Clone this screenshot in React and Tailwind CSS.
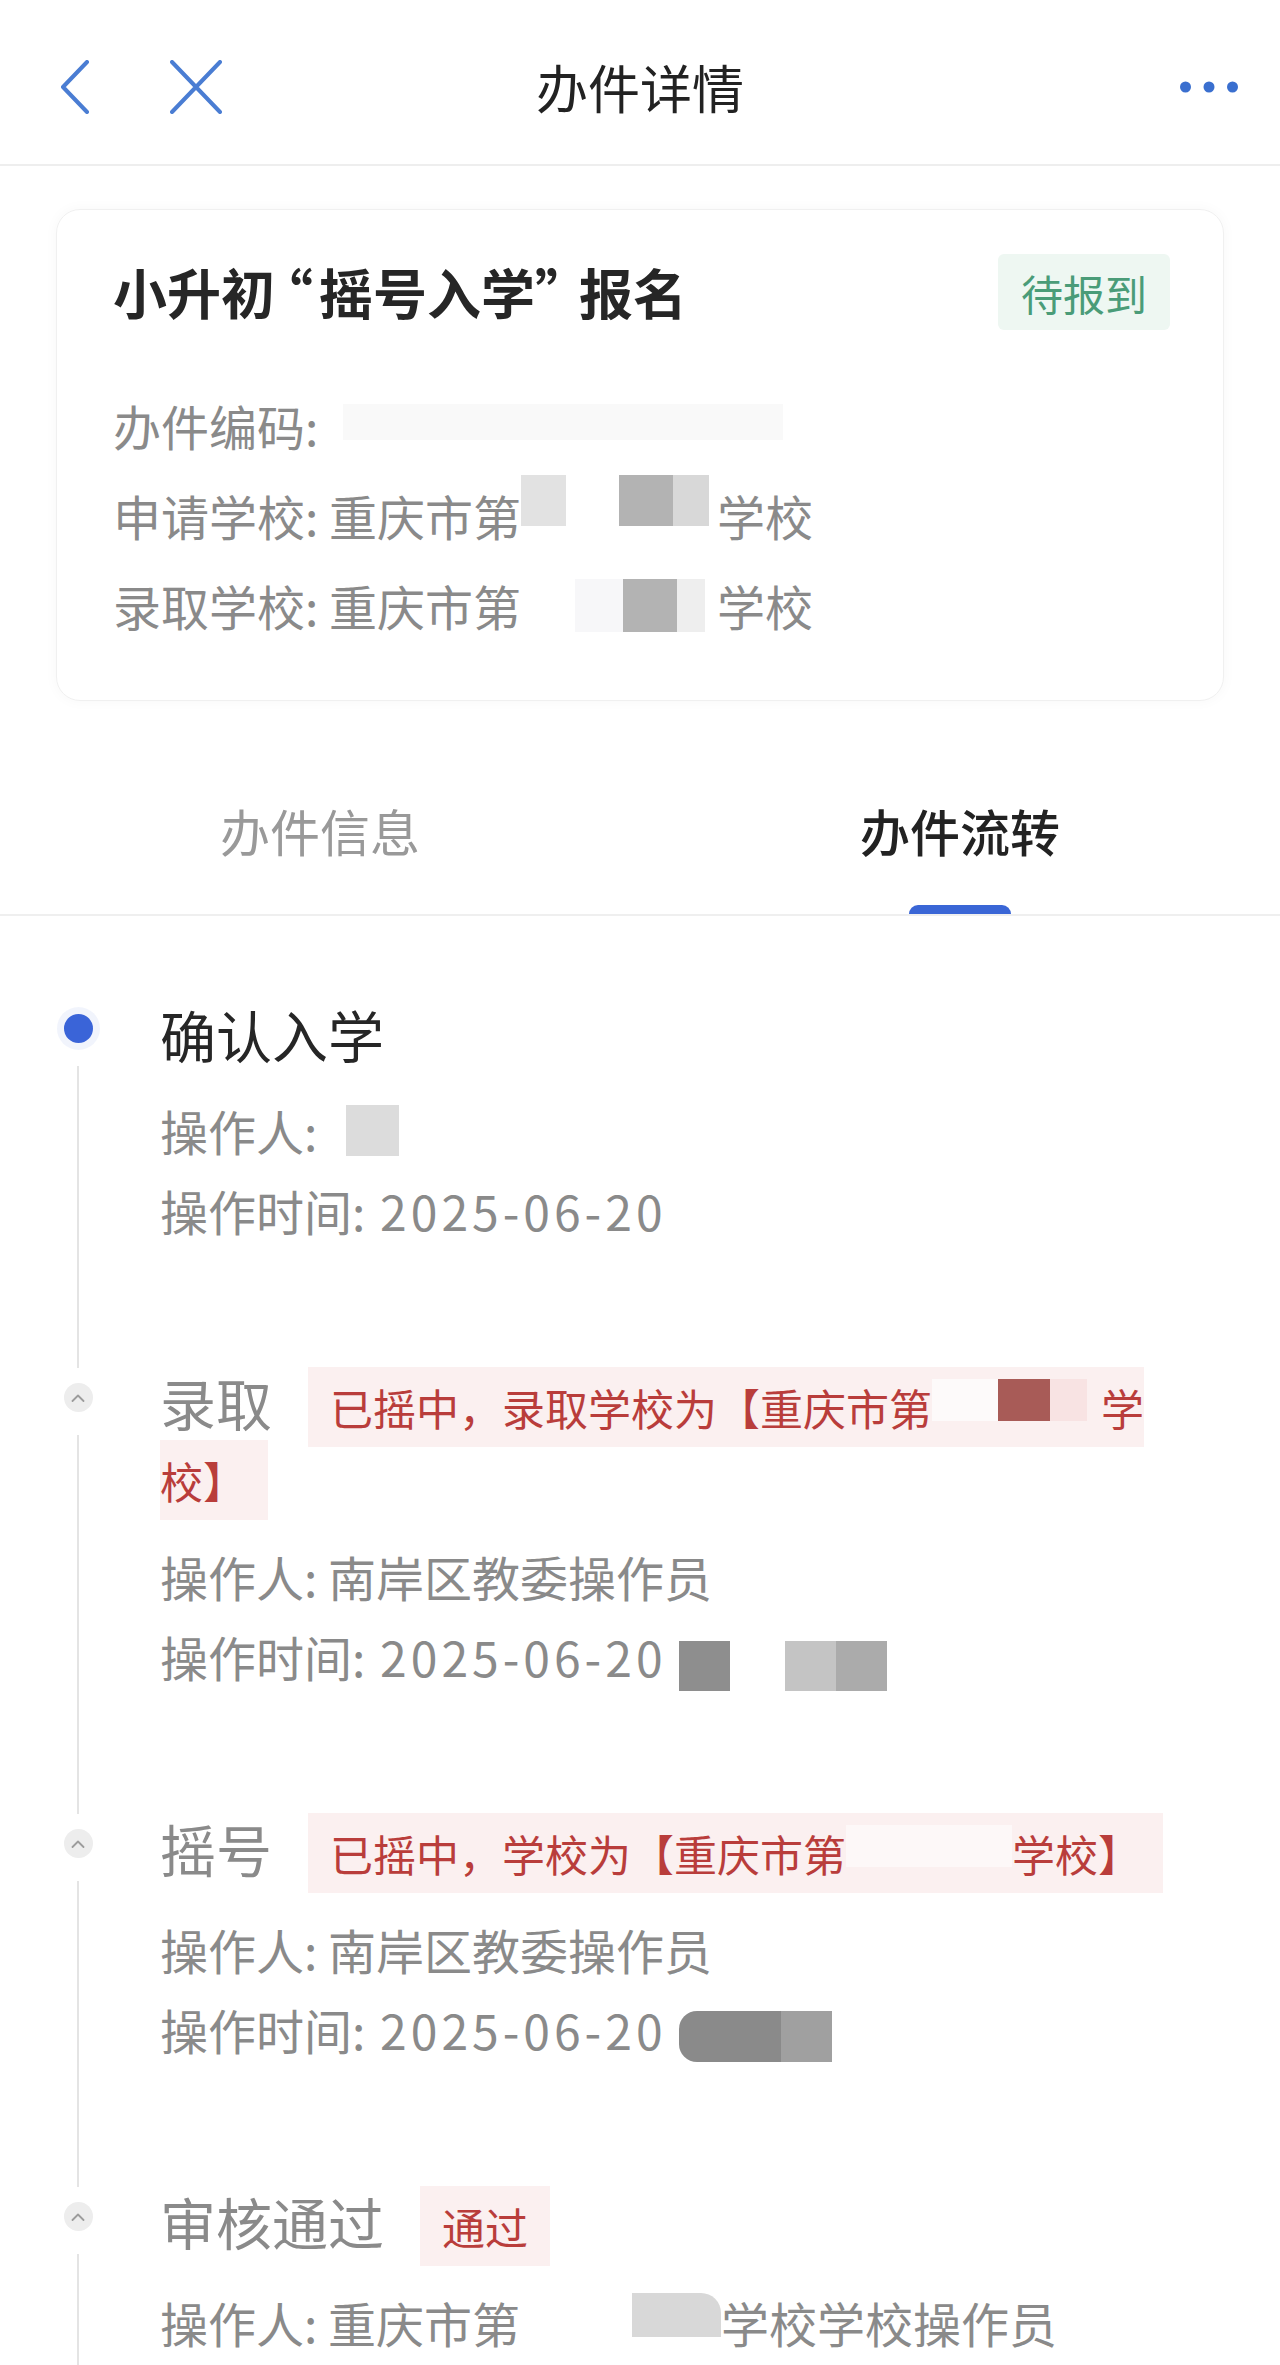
import React from "react";

// small mosaic patches that hide personal data in the screenshot
const Blot = ({ c }) => <span className={"inline-block " + c} />;

const ChevronUp = () => (
  <svg width="14" height="8" viewBox="0 0 14 8" fill="none">
    <path d="M1.5 7 L7 1.5 L12.5 7" stroke="#9c9c9c" strokeWidth="1.8" strokeLinecap="round" strokeLinejoin="round" />
  </svg>
);

const Tag = ({ children, className = "" }) => (
  <span className={"ml-[36px] px-[22px] py-[9px] bg-[#fbf0f0] text-[#b93d3b] text-[43px] " + className}>
    {children}
  </span>
);

const Date = () => <span className="ml-[4px] tracking-[4px]">2025-06-20</span>;

const Step = ({ active, title, tag, children }) => (
  <div className="flex">
    <div className="w-[156px] shrink-0 flex flex-col items-center">
      {active ? (
        <span className="mt-[14px] w-[29px] h-[29px] rounded-full bg-[#3a64d8] shadow-[0_0_0_7px_rgba(58,100,216,0.07)]" />
      ) : (
        <span className="mt-[15px] w-[29px] h-[29px] rounded-full bg-[#ededed] flex items-center justify-center">
          <ChevronUp />
        </span>
      )}
      <div className="mt-[23px] w-[2px] flex-1 bg-[#e4e4e4]" />
    </div>
    <div className="flex-1 ml-[4px] pr-[100px] pb-[118px]">
      <div className={"text-[56px] leading-[68px] " + (active ? "text-[#262626]" : "text-[#8a8a8a]")}>
        {title}
        {tag}
      </div>
      <div className="mt-[22px] text-[48px] leading-[80px] text-[#8a8a8a]">{children}</div>
    </div>
  </div>
);

export default function App() {
  return (
    <div className="w-[1280px] h-[2365px] overflow-hidden bg-white font-['Noto_Sans_CJK_SC','Noto_Sans',sans-serif]">
      {/* top bar */}
      <div className="h-[166px] pt-[10px] px-[42px] border-b-2 border-[#eeeeee] grid grid-cols-[1fr_auto_1fr] items-center">
        <div className="flex items-center pl-[18px]">
          <svg width="30" height="54" viewBox="0 0 30 54" fill="none">
            <path d="M27 2 L3 27 L27 52" stroke="#4a7dd3" strokeWidth="4" strokeLinecap="round" strokeLinejoin="round" />
          </svg>
          <svg className="ml-[80px]" width="52" height="54" viewBox="0 0 52 54" fill="none">
            <path d="M2 2 L50 52 M50 2 L2 52" stroke="#4a7dd3" strokeWidth="4" strokeLinecap="round" />
          </svg>
        </div>
        <div className="text-[52px] text-[#222222] leading-none">办件详情</div>
        <div className="flex justify-end">
          <svg width="58" height="12" viewBox="0 0 58 12">
            <circle cx="5.5" cy="6" r="5.5" fill="#3a6fcf" />
            <circle cx="29" cy="6" r="5.5" fill="#3a6fcf" />
            <circle cx="52.5" cy="6" r="5.5" fill="#3a6fcf" />
          </svg>
        </div>
      </div>

      {/* summary card */}
      <div className="mx-[56px] mt-[43px] rounded-[24px] border border-[#f0f0f0] shadow-[0_0_14px_rgba(0,0,0,0.035)] pt-[44px] pb-[50px] pl-[56px] pr-[53px]">
        <div className="flex items-center justify-between h-[76px]">
          <div className="text-[54px] font-bold text-[#262626] leading-none">
            小升初<span className="-ml-[16px] mr-[6px]">“</span>摇号入学<span className="-mr-[10px]">”</span>报名
          </div>
          <div className="h-[76px] px-[23px] flex items-center rounded-[6px] bg-[#eef7f2] text-[#4a9c78] text-[42px]">
            待报到
          </div>
        </div>
        <div className="mt-[50px] text-[48px] leading-[90px] text-[#8a8a8a]">
          <div>
            办件编码:{" "}
            <Blot c="ml-[14px] w-[440px] h-[36px] align-[6px] bg-[#f9f9f9]" />
          </div>
          <div>
            申请学校: 重庆市第
            <Blot c="w-[45px] h-[51px] align-[10px] bg-[#e2e2e2]" />
            <Blot c="w-[53px] h-[51px] align-[10px] bg-white" />
            <Blot c="w-[54px] h-[51px] align-[10px] bg-[#b3b3b3]" />
            <Blot c="w-[36px] h-[51px] align-[10px] bg-[#d8d8d8]" />
            <Blot c="w-[8px] h-[51px]" />
            学校
          </div>
          <div>
            录取学校: 重庆市第
            <Blot c="w-[54px] h-[53px] align-[-6px] bg-white" />
            <Blot c="w-[48px] h-[53px] align-[-6px] bg-[#f7f7f9]" />
            <Blot c="w-[54px] h-[53px] align-[-6px] bg-[#b3b3b3]" />
            <Blot c="w-[28px] h-[53px] align-[-6px] bg-[#eeeeee]" />
            <Blot c="w-[12px] h-[53px]" />
            学校
          </div>
        </div>
      </div>

      {/* tabs */}
      <div className="mt-[99px] flex border-b-2 border-[#efefef]">
        <div className="flex-1 flex flex-col items-center">
          <div className="text-[50px] leading-[60px] text-[#999999]">办件信息</div>
          <div className="mt-[45px] h-[9px]" />
        </div>
        <div className="flex-1 flex flex-col items-center">
          <div className="text-[50px] leading-[60px] text-[#222222] font-medium">办件流转</div>
          <div className="mt-[45px] h-[9px] w-[102px] rounded-t-full bg-[#3a66d6]" />
        </div>
      </div>

      {/* flow timeline */}
      <div className="pt-[84px]">
        <Step active title="确认入学">
          <div>
            操作人:{" "}
            <Blot c="ml-[18px] w-[53px] h-[51px] align-[-5px] bg-[#dcdcdc]" />
          </div>
          <div>
            操作时间: <Date />
          </div>
        </Step>

        <Step
          title="录取"
          tag={
            <Tag>
              已摇中，录取学校为【重庆市第
              <Blot c="w-[66px] h-[42px] align-[5px] bg-[#fdfafa]" />
              <Blot c="w-[52px] h-[42px] align-[5px] bg-[#a85b57]" />
              <Blot c="w-[37px] h-[42px] align-[5px] bg-[#f8e3e3]" />
              <Blot c="w-[14px] h-[42px]" />
              学校】
            </Tag>
          }
        >
          <div>操作人: 南岸区教委操作员</div>
          <div>
            操作时间: <Date />
            <Blot c="ml-[12px] w-[51px] h-[50px] align-[-14px] bg-[#8e8e8e]" />
            <Blot c="w-[55px] h-[50px] align-[-14px] bg-white" />
            <Blot c="w-[51px] h-[50px] align-[-14px] bg-[#c4c4c4]" />
            <Blot c="w-[51px] h-[50px] align-[-14px] bg-[#ababab]" />
          </div>
        </Step>

        <Step
          title="摇号"
          tag={
            <Tag>
              已摇中，学校为【重庆市第
              <Blot c="w-[166px] h-[42px] align-[5px] bg-[#fdf8f8]" />
              学校】
            </Tag>
          }
        >
          <div>操作人: 南岸区教委操作员</div>
          <div>
            操作时间: <Date />
            <Blot c="ml-[12px] w-[102px] h-[51px] align-[-12px] rounded-l-[18px] bg-[#8a8a8a]" />
            <Blot c="w-[51px] h-[51px] align-[-12px] bg-[#a0a0a0]" />
          </div>
        </Step>

        <Step title="审核通过" tag={<Tag>通过</Tag>}>
          <div>
            操作人: 重庆市第
            <Blot c="w-[112px] h-[40px] align-[6px] bg-white" />
            <Blot c="w-[89px] h-[44px] align-[6px] rounded-tr-[20px] bg-[#d8d8d8]" />
            学校学校操作员
          </div>
          <div>
            操作时间: <Date />
          </div>
        </Step>
      </div>
    </div>
  );
}
